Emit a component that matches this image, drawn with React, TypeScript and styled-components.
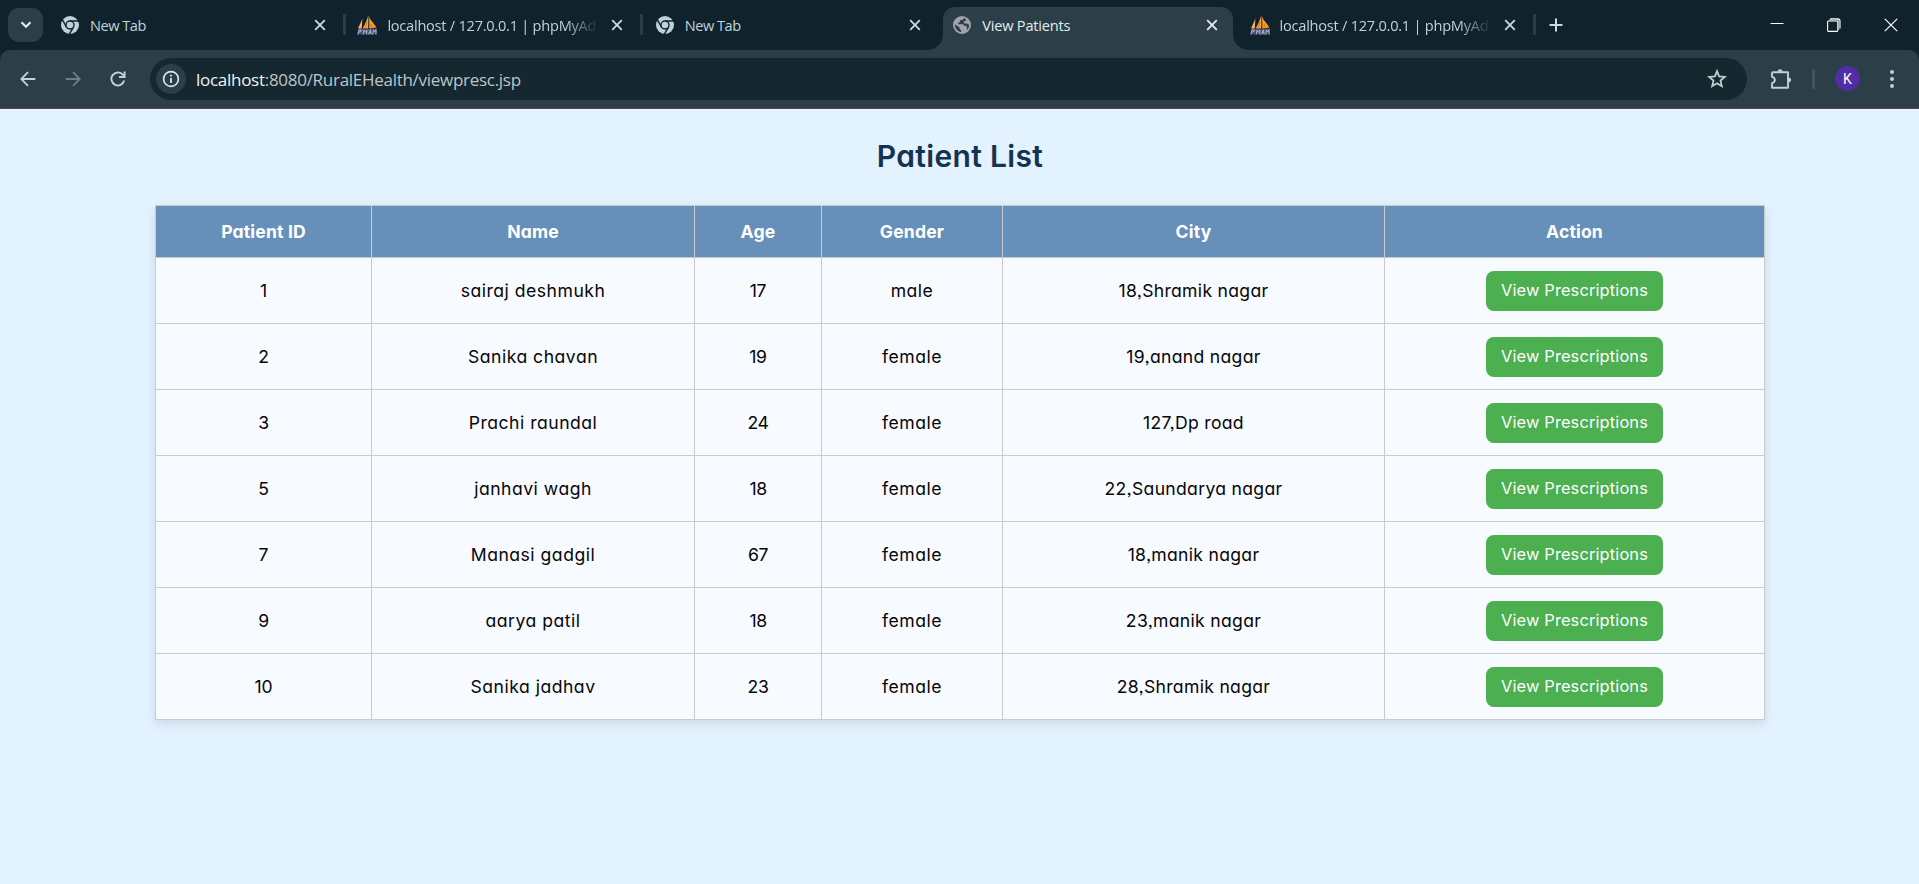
import React from "react";
import styled, { createGlobalStyle } from "styled-components";

const GlobalStyle = createGlobalStyle`
  * { box-sizing: border-box; }
  html, body, #root { height: 100%; }
  body { margin: 0; background: #e3f2ff; overflow: hidden; }
`;

const c = {
  strip: "#10232c",
  toolbar: "#2c3e47",
  field: "#152830",
  icon: "#bdd2dd",
  text: "#bfd2dc",
};

const Window = styled.div`
  display: flex;
  flex-direction: column;
  height: 884px;
  width: 1919px;
`;

const TabStrip = styled.div`
  height: 50px;
  flex: none;
  display: flex;
  align-items: stretch;
  background: ${c.strip};
`;

const TabSearch = styled.button`
  width: 35px;
  height: 34px;
  margin: 8px 8px 0;
  padding: 0;
  border: 0;
  border-radius: 11px;
  background: ${c.toolbar};
  display: grid;
  place-items: center;
`;

const TabItem = styled.div<{ $active?: boolean }>`
  position: relative;
  width: 290px;
  flex: none;
  height: 43px;
  margin-top: 7px;
  padding: 0 11px 7px 10px;
  display: flex;
  align-items: center;
  border-radius: 12px 12px 0 0;
  color: ${(p) => (p.$active ? "#e4ebee" : c.text)};
  background: ${(p) => (p.$active ? c.toolbar : "transparent")};

  &::before,
  &::after {
    content: "";
    display: ${(p) => (p.$active ? "block" : "none")};
    position: absolute;
    bottom: 0;
    width: 15px;
    height: 15px;
  }
  &::before {
    left: -15px;
    background: radial-gradient(circle at 0 0, transparent 14.5px, ${c.toolbar} 15px);
  }
  &::after {
    right: -15px;
    background: radial-gradient(circle at 100% 0, transparent 14.5px, ${c.toolbar} 15px);
  }
`;

const TabIcon = styled.span<{ $wide?: boolean }>`
  width: ${(p) => (p.$wide ? 30 : 29)}px;
  margin-left: ${(p) => (p.$wide ? -1 : 0)}px;
  flex: none;
  display: flex;
  align-items: center;
`;

const TabTitle = styled.span<{ $fade?: boolean; $spacing: number }>`
  width: 210px;
  flex: none;
  white-space: nowrap;
  font: 14.6px/22px "Open Sans", sans-serif;
  letter-spacing: ${(p) => p.$spacing}px;
  mask-image: ${(p) => (p.$fade ? "linear-gradient(90deg, #000 178px, transparent 212px)" : "none")};
`;

const TabClose = styled.span`
  width: 22px;
  margin-left: 10px;
  display: grid;
  place-items: center;
`;

const Separator = styled.span<{ $hidden?: boolean }>`
  width: 7.4px;
  flex: none;
  display: flex;
  padding: 14px 0 15px 2px;
  &::before {
    content: "";
    width: 3px;
    border-radius: 1px;
    background: ${(p) => (p.$hidden ? "transparent" : c.toolbar)};
  }
`;

const NewTab = styled.span`
  width: 36px;
  display: grid;
  place-items: center;
`;

const Controls = styled.div`
  margin-left: auto;
  display: flex;
`;

const Control = styled.span`
  width: 57px;
  height: 49px;
  display: grid;
  place-items: center;
`;

const ToolbarBack = styled.div`
  flex: none;
  background: ${c.strip};
`;

const Toolbar = styled.div`
  height: 59px;
  display: flex;
  align-items: flex-start;
  padding: 8px 0 0 10px;
  background: ${c.toolbar};
  border-radius: 10px 10px 0 0;
  border-bottom: 1.5px solid #54494d;
`;

const ToolButton = styled.span<{ $w: number }>`
  width: ${(p) => p.$w}px;
  height: 41px;
  flex: none;
  display: grid;
  place-items: center;
`;

const AddressBar = styled.div`
  width: 1597px;
  flex: none;
  height: 42px;
  margin-left: 5px;
  border-radius: 21px;
  background: ${c.field};
  display: flex;
  align-items: center;
  padding: 0 20px 0 6px;
`;

const SiteInfo = styled.span`
  width: 30px;
  height: 30px;
  border-radius: 50%;
  background: ${c.toolbar};
  display: grid;
  place-items: center;
`;

const Url = styled.span`
  flex: 1;
  margin-left: 10px;
  font: 17px/24px "Open Sans", sans-serif;
  letter-spacing: -0.28px;
  padding-top: 1px;
  color: #bcc6ca;
  b {
    font-weight: 400;
    color: #eef3f5;
  }
`;

const ToolDivider = styled.span`
  width: 3px;
  flex: none;
  height: 20px;
  margin: 11px 0 0 -1px;
  border-radius: 1px;
  background: #42545d;
`;

const Avatar = styled.span`
  width: 25px;
  flex: none;
  height: 25px;
  margin: 8px 0 0 20px;
  border-radius: 50%;
  background: #512da8;
  color: #fff;
  font: 14px/26px Roboto, sans-serif;
  text-align: center;
`;

const Page = styled.main`
  flex: 1;
  background: #e3f2ff;
  font-family: Inter, sans-serif;
  font-feature-settings: "cv11", "ss03";
`;

const Title = styled.h2`
  margin: 25px 0 26px;
  padding-left: 1px;
  text-align: center;
  font-size: 30px;
  line-height: 45px;
  font-weight: 600;
  letter-spacing: 0.35px;
  color: #153350;
`;

const Table = styled.table`
  width: 1610px;
  margin-left: 155px;
  table-layout: fixed;
  border-collapse: separate;
  border-spacing: 0;
  border-left: 1px solid #c9cacc;
  border-top: 1px solid #c9cacc;
  background: #f7faff;
  box-shadow: 0 4px 10px rgba(0, 0, 0, 0.1);
`;

const Col = styled.col<{ $w: number }>`
  width: ${(p) => p.$w}px;
`;

const HeadCell = styled.th`
  height: 52px;
  padding: 1px 0 0;
  border-right: 1px solid #c9cacc;
  border-bottom: 1px solid #c9cacc;
  background: #668fb9;
  color: #fff;
  font-size: 17.6px;
  line-height: 26px;
  font-weight: 700;
  letter-spacing: 0.15px;
`;

const Cell = styled.td<{ $spacing?: number }>`
  height: 66px;
  padding: 1px 0 0;
  border-right: 1px solid #c9cacc;
  border-bottom: 1px solid #c9cacc;
  color: #060608;
  text-align: center;
  font-size: 17.6px;
  line-height: 26px;
  letter-spacing: ${(p) => p.$spacing ?? 0}px;
`;

const ActionCell = styled(Cell)`
  padding: 0;
`;

const ViewButton = styled.button`
  display: block;
  width: 177px;
  height: 40px;
  margin: 0 auto;
  padding: 0 0 2px;
  border: 0;
  border-radius: 8px;
  background: #4caf50;
  color: #fff;
  font: 400 16.4px/24px Inter, sans-serif;
  font-feature-settings: inherit;
  letter-spacing: 0.14px;
`;

const ChromeIcon = () => (
  <svg width="18" height="18" viewBox="0 0 18 18">
    <circle cx="9" cy="9" r="9" fill={c.icon} />
    <circle cx="9" cy="9" r="4.7" fill={c.strip} />
    <g stroke={c.strip} strokeWidth="1.5">
      <path d="M9 5H18" />
      <path d="M9 5H18" transform="rotate(120 9 9)" />
      <path d="M9 5H18" transform="rotate(240 9 9)" />
    </g>
    <circle cx="9" cy="9" r="3.3" fill={c.icon} />
  </svg>
);

const GlobeIcon = () => (
  <svg width="18" height="18" viewBox="0 0 18 18">
    <circle cx="9" cy="9" r="9" fill="#9fa4aa" />
    <path
      d="M10.6 1.9C10.7 3.5 9.8 4.2 8.2 4.1C7.4 4.1 7 4.6 7 5.4C7 6.1 6.4 6.5 5.2 6.5V8.2H9.6C10.9 8.2 11.2 9 11.2 10.1H12.5C13.5 10.1 13.9 10.7 13.9 11.6V14.2A7.2 7.2 0 0 0 16.2 8.7L15.4 8.6C14.9 8.6 14.4 8.2 14.4 7.6H12.1C11.2 7.6 10.7 7 10.7 6.3C10.7 5.5 11.1 5 12.1 5H12.8V2.9A7 7 0 0 0 10.6 1.9ZM1.9 8.3A7.2 7.2 0 0 0 8.2 16.2V14.1C7.1 14 6.8 13.4 6.8 12.5V11.7Z"
      fill={c.toolbar}
    />
  </svg>
);

const PmaIcon = () => (
  <svg width="20" height="20" viewBox="0 0 20 20">
    <path d="M5.4 3L4.8 13.6H1C2.4 10.2 4.3 7.2 5.4 3Z" fill="#f8b266" />
    <path d="M11.4 0L11.2 13.6H5.6C7.9 9.8 10 5.2 11.4 0Z" fill="#fda53a" />
    <path d="M12.2 1.2C13.3 5.8 16.4 7.2 19.4 12.4L12.2 13.6Z" fill="#f79a22" />
    <path d="M8 12.8L10.2 7M14 9L14.7 12" stroke="#a8600f" strokeWidth=".6" />
    <path d="M1.4 14L19.8 13.4V19.6H0Z" fill="#4c4d74" />
    <g fill="none" stroke="#b5b5cf" strokeWidth=".9">
      <path d="M1 19.5L2 14.9H4.2Q5 17 2 17.1" />
      <path d="M6.2 19.5L7 15L8.3 17.4L10 15L9.6 19.5" />
      <path d="M11.3 19.5L13.4 14.7L14.2 19.5M12 17.8H14" />
      <path d="M15.8 19.5L16.4 14.8L17.6 17L19 14.6V19.5" />
    </g>
  </svg>
);

const CloseIcon = ({ active = false }) => (
  <svg width="12" height="12" viewBox="0 0 12 12" stroke={active ? "#e8eef0" : "#c9dbe3"} strokeWidth="1.8">
    <path d="M1.2 1.2L10.8 10.8M10.8 1.2L1.2 10.8" />
  </svg>
);

const tabs = [
  { title: "New Tab", kind: "chrome", spacing: -0.5 },
  { title: "localhost / 127.0.0.1 | phpMyAd", kind: "pma", spacing: -0.25 },
  { title: "New Tab", kind: "chrome", spacing: -0.5 },
  { title: "View Patients", kind: "page", spacing: -0.2 },
  { title: "localhost / 127.0.0.1 | phpMyAd", kind: "pma", spacing: -0.25 },
];

const columns = [
  { label: "Patient ID", w: 216, spacing: -0.2 },
  { label: "Name", w: 323, spacing: 0.5 },
  { label: "Age", w: 127, spacing: -0.4 },
  { label: "Gender", w: 181, spacing: 0.5 },
  { label: "City", w: 382, spacing: 0.3 },
  { label: "Action", w: 380, spacing: 0 },
];

const patients = [
  ["1", "sairaj deshmukh", "17", "male", "18,Shramik nagar"],
  ["2", "Sanika chavan", "19", "female", "19,anand nagar"],
  ["3", "Prachi raundal", "24", "female", "127,Dp road"],
  ["5", "janhavi wagh", "18", "female", "22,Saundarya nagar"],
  ["7", "Manasi gadgil", "67", "female", "18,manik nagar"],
  ["9", "aarya patil", "18", "female", "23,manik nagar"],
  ["10", "Sanika jadhav", "23", "female", "28,Shramik nagar"],
];

export default function App() {
  return (
    <Window>
      <GlobalStyle />
      <TabStrip>
        <TabSearch>
          <svg width="12" height="8" viewBox="0 0 12 8" fill="none" stroke="#e3eaee" strokeWidth="2.2">
            <path d="M1.5 1.3L6 5.8L10.5 1.3" />
          </svg>
        </TabSearch>
        {tabs.map((t, i) => (
          <React.Fragment key={i}>
            <TabItem $active={t.kind === "page"}>
              <TabIcon $wide={t.kind === "pma"}>
                {t.kind === "chrome" && <ChromeIcon />}
                {t.kind === "pma" && <PmaIcon />}
                {t.kind === "page" && <GlobeIcon />}
              </TabIcon>
              <TabTitle $fade={t.kind === "pma"} $spacing={t.spacing}>{t.title}</TabTitle>
              <TabClose>
                <CloseIcon active={t.kind === "page"} />
              </TabClose>
            </TabItem>
            <Separator $hidden={i === 2 || i === 3} />
          </React.Fragment>
        ))}
        <NewTab>
          <svg width="14" height="14" viewBox="0 0 14 14" stroke="#c9dbe3" strokeWidth="2">
            <path d="M7 .5V13.5M.5 7H13.5" />
          </svg>
        </NewTab>
        <Controls>
          <Control>
            <svg width="14" height="14" viewBox="0 0 14 14">
              <path d="M.5 5.5H13.5" stroke="#fff" />
            </svg>
          </Control>
          <Control>
            <svg width="14" height="14" viewBox="0 0 14 14" fill="none">
              <path d="M2 2H11.5V12" stroke="#75838a" strokeWidth="1.6" />
              <path d="M3 .9H11Q13 .9 13 3V10.5" stroke="#fff" strokeWidth="1.1" />
              <rect x=".6" y="3" width="10.2" height="10.4" rx=".8" stroke="#fff" strokeWidth="1.1" fill={c.strip} />
            </svg>
          </Control>
          <Control>
            <svg width="14" height="14" viewBox="0 0 14 14" stroke="#fff" strokeWidth="1.2">
              <path d="M.8 .8L13.2 13.2M13.2 .8L.8 13.2" />
            </svg>
          </Control>
        </Controls>
      </TabStrip>

      <ToolbarBack>
        <Toolbar>
          <ToolButton $w={35}>
            <svg width="16" height="16" viewBox="0 0 16 16" fill="none" stroke={c.icon} strokeWidth="1.8">
              <path d="M15.3 8H1.8M8 1.2L1.3 8L8 14.8" />
            </svg>
          </ToolButton>
          <ToolButton $w={55}>
            <svg width="16" height="16" viewBox="0 0 16 16" fill="none" stroke="#6c7d86" strokeWidth="1.8">
              <path d="M.7 8H14.2M8 1.2L14.7 8L8 14.8" />
            </svg>
          </ToolButton>
          <ToolButton $w={35}>
            <svg width="16" height="16" viewBox="0 0 16 16" fill="none" stroke={c.icon} strokeWidth="1.9">
              <path d="M14.2 9.6A6.5 6.5 0 1 1 12.6 3.4L14.6 5.4M14.6 .6V6H9" />
            </svg>
          </ToolButton>
          <ToolButton $w={10} />
          <AddressBar>
            <SiteInfo>
              <svg width="18" height="18" viewBox="0 0 18 18">
                <circle cx="9" cy="9" r="7.4" fill="none" stroke="#dfe6ea" strokeWidth="1.7" />
                <path d="M9 8V13M9 4.8V6.6" stroke="#dfe6ea" strokeWidth="1.8" />
              </svg>
            </SiteInfo>
            <Url>
              <b>localhost</b>:8080/RuralEHealth/viewpresc.jsp
            </Url>
            <svg width="20" height="20" viewBox="0 0 20 20" fill="none" stroke="#c4cdd3" strokeWidth="1.8">
              <path d="M10 2.2L12.1 7.4L17.8 7.9L13.5 11.6L14.8 17.2L10 14.2L5.2 17.2L6.5 11.6L2.2 7.9L7.9 7.4Z" />
            </svg>
          </AddressBar>
          <ToolButton $w={66}>
            <svg width="22" height="22" viewBox="0 0 22 22" fill="none" stroke={c.icon} strokeWidth="1.9">
              <path d="M4 4.3H19V19.7H3V15.1Q5.8 14.3 5.8 11.9Q5.8 9.5 3 8.9V5.3Q3 4.3 4 4.3Z" strokeLinejoin="round" />
              <path d="M8.6 3.7A2.5 2.5 0 0 1 13.6 3.7ZM19.6 9.4A2.5 2.5 0 0 1 19.6 14.4Z" fill={c.icon} stroke="none" />
            </svg>
          </ToolButton>
          <ToolDivider />
          <Avatar>K</Avatar>
          <ToolButton $w={64}>
            <svg width="6" height="20" viewBox="0 0 6 20" fill={c.icon}>
              <circle cx="3" cy="3" r="2" />
              <circle cx="3" cy="10" r="2" />
              <circle cx="3" cy="17" r="2" />
            </svg>
          </ToolButton>
        </Toolbar>
      </ToolbarBack>

      <Page>
        <Title>Patient List</Title>
        <Table>
          <colgroup>
            {columns.map((col) => (
              <Col key={col.label} $w={col.w} />
            ))}
          </colgroup>
          <thead>
            <tr>
              {columns.map((col) => (
                <HeadCell key={col.label}>{col.label}</HeadCell>
              ))}
            </tr>
          </thead>
          <tbody>
            {patients.map((row) => (
              <tr key={row[0]}>
                {row.map((value, i) => (
                  <Cell key={i} $spacing={columns[i].spacing}>{value}</Cell>
                ))}
                <ActionCell>
                  <ViewButton>View Prescriptions</ViewButton>
                </ActionCell>
              </tr>
            ))}
          </tbody>
        </Table>
      </Page>
    </Window>
  );
}
